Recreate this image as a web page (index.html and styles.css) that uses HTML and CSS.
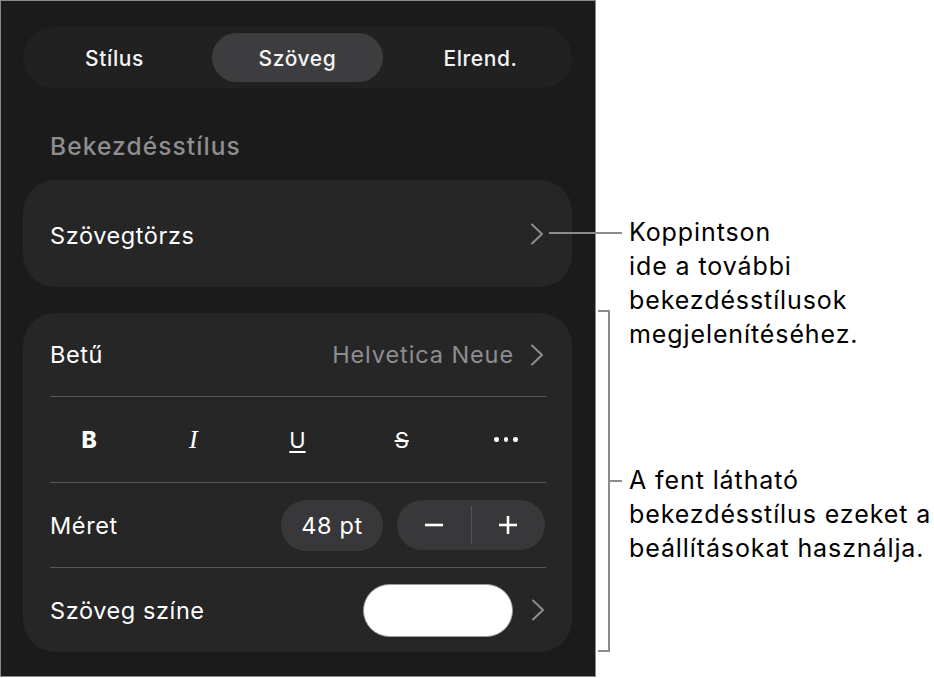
FILE: index.html
```html
<!DOCTYPE html>
<html lang="hu">
<head>
<meta charset="utf-8">
<title>Szöveg formázása</title>
<link rel="stylesheet" href="styles.css">
</head>
<body>
<div class="page">
  <aside class="panel">
    <nav class="segmented">
      <span class="seg">Stílus</span>
      <span class="seg seg-active">Szöveg</span>
      <span class="seg">Elrend.</span>
    </nav>

    <h2 class="section-title">Bekezdésstílus</h2>

    <div class="card card-style">
      <span class="label">Szövegtörzs</span>
      <svg class="chevron" viewBox="0 0 14 22" width="14" height="22"><polyline points="2,1.5 12,11 2,20.5"/></svg>
    </div>

    <div class="card card-settings">
      <div class="row row-font">
        <span class="label">Betű</span>
        <span class="value">Helvetica Neue</span>
        <svg class="chevron" viewBox="0 0 14 22" width="14" height="22"><polyline points="2,1.5 12,11 2,20.5"/></svg>
      </div>
      <div class="sep"></div>
      <div class="row row-format">
        <span class="fmt fmt-b">B</span>
        <span class="fmt fmt-i">I</span>
        <span class="fmt fmt-u">U</span>
        <span class="fmt fmt-s">S</span>
        <span class="fmt fmt-more"><i></i><i></i><i></i></span>
      </div>
      <div class="sep"></div>
      <div class="row row-size">
        <span class="label">Méret</span>
        <span class="size-pill">48 pt</span>
        <div class="stepper">
          <span class="step">
            <svg viewBox="0 0 22 22" width="22" height="22"><line x1="2" y1="11" x2="20" y2="11"/></svg>
          </span>
          <span class="step-div"></span>
          <span class="step">
            <svg viewBox="0 0 22 22" width="22" height="22"><line x1="2" y1="11" x2="20" y2="11"/><line x1="11" y1="2" x2="11" y2="20"/></svg>
          </span>
        </div>
      </div>
      <div class="sep"></div>
      <div class="row row-color">
        <span class="label">Szöveg színe</span>
        <span class="swatch"></span>
        <svg class="chevron" viewBox="0 0 14 22" width="14" height="22"><polyline points="2,1.5 12,11 2,20.5"/></svg>
      </div>
    </div>
  </aside>

  <div class="notes">
    <span class="leader leader-style"></span>
    <p class="note note-style">Koppintson<br>ide a további<br>bekezdésstílusok<br>megjelenítéséhez.</p>

    <span class="bracket"></span>
    <span class="leader leader-settings"></span>
    <p class="note note-settings">A fent látható<br>bekezdésstílus ezeket a<br>beállításokat használja.</p>
  </div>
</div>
</body>
</html>
```

FILE: styles.css
```css
* {
  box-sizing: border-box;
}

html, body {
  margin: 0;
  padding: 0;
  background: #ffffff;
}

body {
  font-family: Inter, "Noto Sans", "DejaVu Sans", sans-serif;
  width: 934px;
  height: 678px;
  overflow: hidden;
}

.page {
  position: relative;
  display: flex;
  width: 934px;
  height: 678px;
}

/* ---------- dark inspector panel ---------- */

.panel {
  width: 596px;
  height: 677px;
  flex: none;
  background: #1b1b1b;
  border: 1px solid #8a8a8a;
  padding: 26px 23px 0 22px;
  display: flex;
  flex-direction: column;
  color: #ffffff;
}

.segmented {
  height: 61px;
  border-radius: 31px;
  background: #212121;
  padding: 6px;
  display: grid;
  grid-template-columns: 1fr 1fr 1fr;
  gap: 12px;
}

.seg {
  display: flex;
  align-items: center;
  justify-content: center;
  padding-top: 2px;
  border-radius: 25px;
  font-size: 21px;
  font-weight: 450;
  letter-spacing: 0.6px;
  color: #f4f4f4;
}

.seg-active {
  background: #3d3d3f;
}

.section-title {
  margin: 45px 0 21px 0;
  padding-left: 27px;
  height: 26px;
  line-height: 26px;
  font-size: 24.5px;
  font-weight: 500;
  letter-spacing: 1.1px;
  color: #8e8e92;
}

.card {
  background: #262626;
  border-radius: 32px;
}

.card-style {
  height: 107px;
  display: flex;
  align-items: center;
  justify-content: space-between;
  padding: 0 28px 0 27px;
  margin-bottom: 26px;
}

.card-style .label {
  margin-top: 3px;
}

.label {
  font-size: 23.5px;
  color: #ffffff;
  letter-spacing: 0.6px;
}

.chevron {
  flex: none;
  fill: none;
  stroke: #8d8d90;
  stroke-width: 2;
  stroke-linecap: round;
  stroke-linejoin: round;
}

.card-settings {
  height: 339px;
  display: flex;
  flex-direction: column;
}

.sep {
  height: 1px;
  margin: 0 26px 0 27px;
  background: #595959;
  flex: none;
}

.row {
  display: flex;
  align-items: center;
  flex: none;
}

.row-font {
  height: 83px;
  padding: 0 28px 0 27px;
}

.row-font .value {
  margin-left: auto;
  margin-right: 16px;
  font-size: 23.5px;
  letter-spacing: 0.9px;
  color: #8e8e92;
}

.row-format {
  height: 85px;
  padding: 0 14px;
}

.fmt {
  flex: 1;
  display: flex;
  justify-content: center;
  align-items: center;
  font-size: 22px;
  color: #ffffff;
}

.fmt-b {
  font-weight: 800;
  font-size: 23px;
}

.fmt-i {
  font-family: "Liberation Serif", "DejaVu Serif", serif;
  font-style: italic;
  font-size: 26px;
}

.fmt-u {
  text-decoration: underline;
  text-decoration-thickness: 2px;
  text-underline-offset: 3px;
}

.fmt-s {
  text-decoration: line-through;
  text-decoration-thickness: 2px;
}

.fmt-more {
  gap: 5px;
}

.fmt-more i {
  width: 4.5px;
  height: 4.5px;
  border-radius: 50%;
  background: #ffffff;
}

.row-size {
  height: 84px;
  padding: 0 27px 0 27px;
}

.size-pill {
  margin-left: auto;
  width: 102px;
  height: 51px;
  border-radius: 26px;
  background: #38383a;
  display: flex;
  align-items: center;
  justify-content: center;
  font-size: 23.5px;
  letter-spacing: 0.6px;
  color: #ffffff;
}

.stepper {
  margin-left: 14px;
  width: 148px;
  height: 50px;
  border-radius: 25px;
  background: #38383a;
  display: flex;
  align-items: center;
}

.step {
  flex: 1;
  display: flex;
  justify-content: center;
  align-items: center;
}

.step svg {
  stroke: #ffffff;
  stroke-width: 2.6;
}

.step-div {
  width: 1px;
  height: 38px;
  background: #545456;
}

.row-color {
  height: 84px;
  padding: 0 27px 0 27px;
}

.swatch {
  margin-left: auto;
  margin-right: 18px;
  width: 150px;
  height: 53px;
  border-radius: 27px;
  background: #ffffff;
  border: 1.5px solid #9a9a9a;
}

/* ---------- annotations beside the panel ---------- */

.notes {
  flex: 1;
}

.note {
  position: absolute;
  left: 629px;
  margin: 0;
  font-size: 25px;
  line-height: 34px;
  color: #000000;
  letter-spacing: 0.9px;
  white-space: nowrap;
}

.note-style {
  top: 215px;
}

.note-settings {
  top: 463px;
}

.leader {
  position: absolute;
  height: 2px;
  background: #8c8c8c;
}

.leader-style {
  left: 549px;
  top: 232px;
  width: 73px;
}

.leader-settings {
  left: 608px;
  top: 480px;
  width: 14px;
}

.bracket {
  position: absolute;
  left: 598px;
  top: 310px;
  width: 12px;
  height: 342px;
  border: 2px solid #8c8c8c;
  border-left: none;
}
```
